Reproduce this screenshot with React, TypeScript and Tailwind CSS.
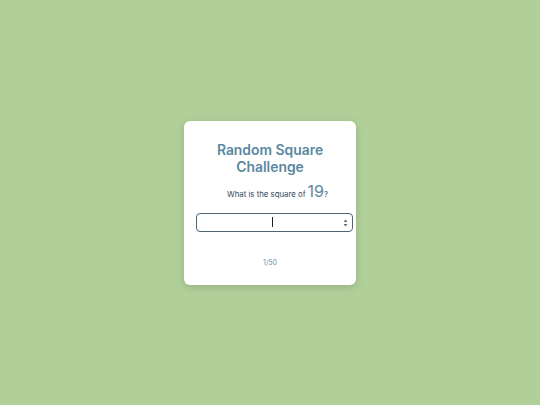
export default function App() {
  return (
    <div className="w-[540px] h-[405px] bg-[#b1d099] flex items-center justify-center" style={{ fontFamily: 'Inter, "Noto Sans", sans-serif' }}>
      <div className="w-[172px] h-[164px] bg-white rounded-[6px] shadow-[0_2px_8px_rgba(0,0,0,0.15)] flex flex-col items-center pt-[21px] pl-[12px] pr-[3px]">
        <div className="text-[13.9px] leading-[17px] font-semibold text-[#5a88a0] text-center pr-[9px]">
          Random Square
          <br />
          Challenge
        </div>
        <div className="mt-[6px] flex items-baseline text-[7.8px] text-[#34475a] pl-[6px]">
          <span>What is the square of</span>
          <span className="text-[16px] text-[#5a88a0] ml-[2px] leading-[19px]">19</span>
          <span>?</span>
        </div>
        <div className="mt-[12px] w-[157px] h-[19px] border border-[#4d6678] rounded-[4px] relative flex items-center justify-center pr-[5px]">
          <div className="w-px h-[10px] bg-[#222]" />
          <svg className="absolute right-[4px] top-[5px]" width="5" height="8" viewBox="0 0 5 8">
            <path d="M2.5 0.5 L4.5 3 L0.5 3 Z" fill="#6b6b6b" />
            <path d="M0.5 5 L4.5 5 L2.5 7.5 Z" fill="#6b6b6b" />
          </svg>
        </div>
        <div className="mt-[26px] text-[7px] text-[#6f93ab] pr-[9px]">1/50</div>
      </div>
    </div>
  );
}
